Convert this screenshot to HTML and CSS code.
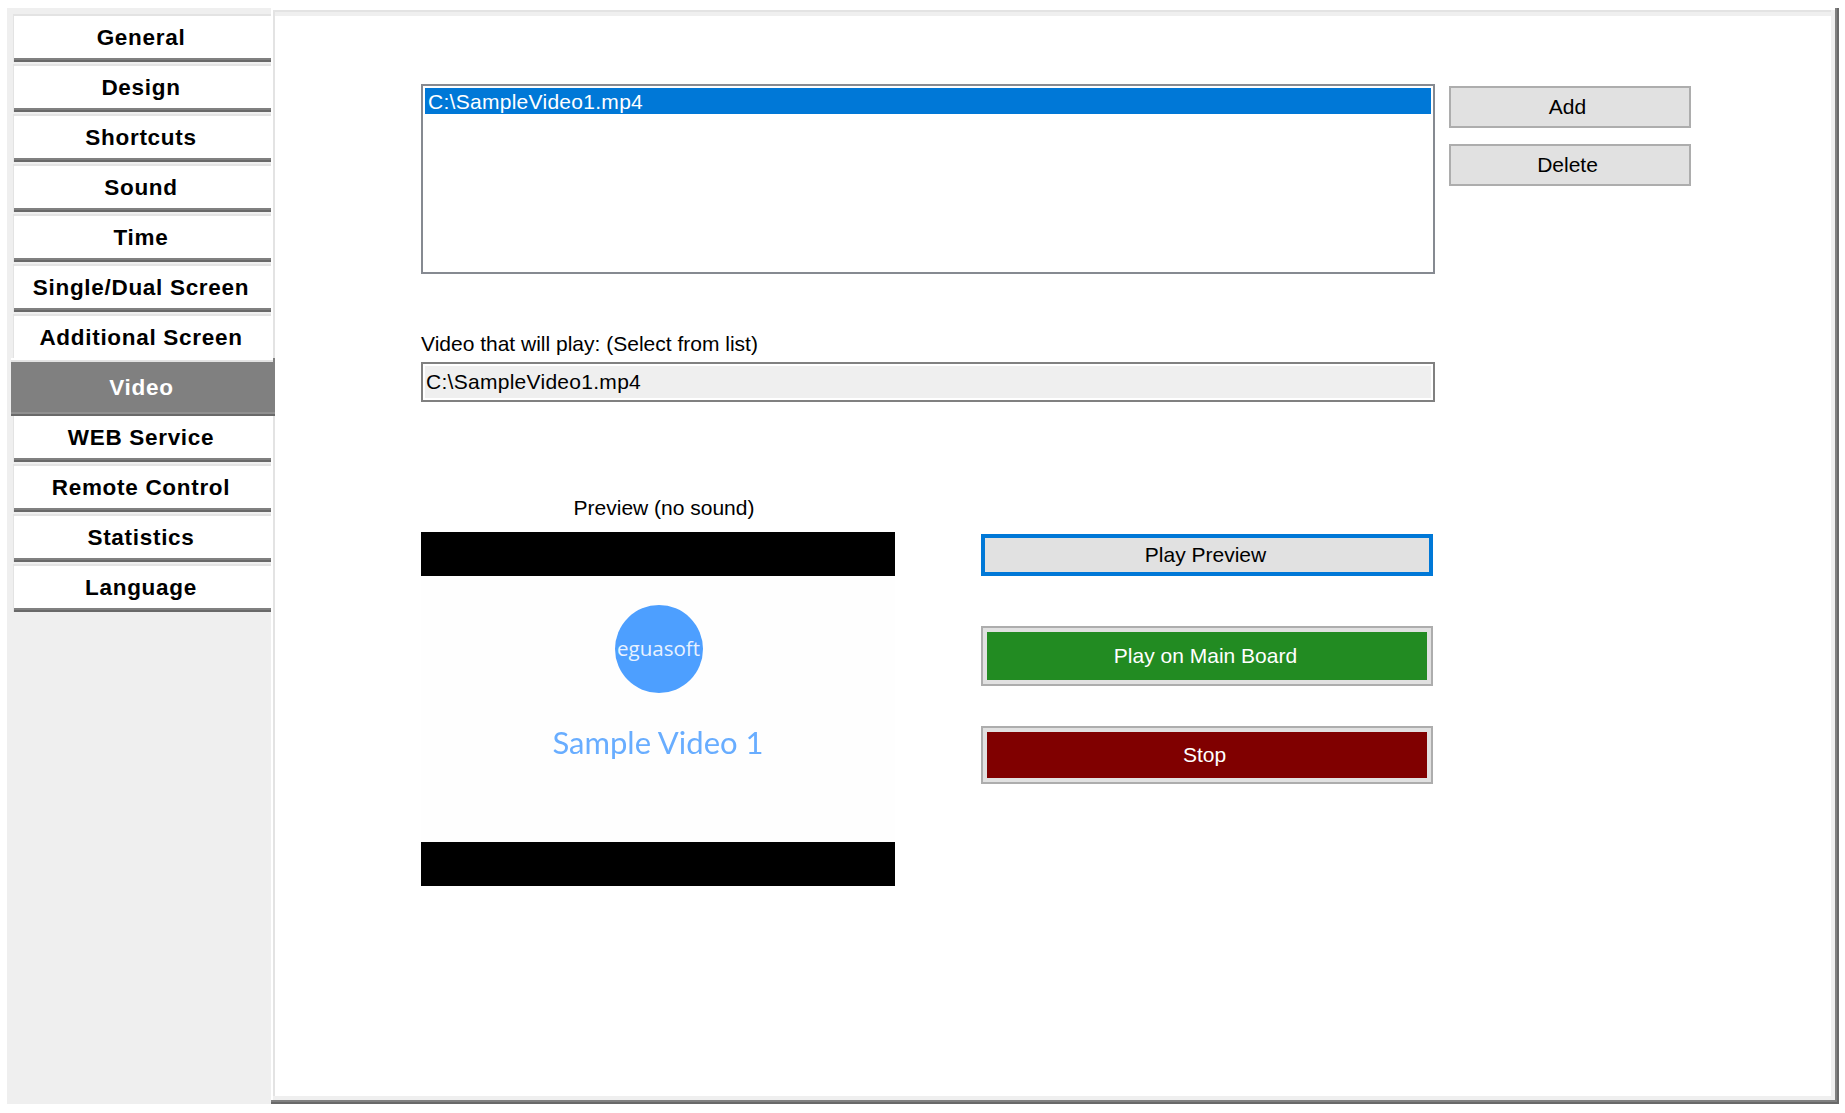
FILE: index.html
```html
<!DOCTYPE html>
<html lang="en">
<head>
<meta charset="utf-8">
<title>Settings - Video</title>
<link rel="stylesheet" href="styles.css">
</head>
<body>
<div class="app">
  <nav class="sidebar">
    <div class="tab">General</div>
    <div class="tab">Design</div>
    <div class="tab">Shortcuts</div>
    <div class="tab">Sound</div>
    <div class="tab">Time</div>
    <div class="tab">Single/Dual Screen</div>
    <div class="tab">Additional Screen</div>
    <div class="tab tab-active">Video</div>
    <div class="tab">WEB Service</div>
    <div class="tab">Remote Control</div>
    <div class="tab">Statistics</div>
    <div class="tab">Language</div>
  </nav>
  <main class="panel">
    <section class="list-row">
      <div class="listbox">
        <div class="list-item">C:\SampleVideo1.mp4</div>
      </div>
      <div class="list-actions">
        <button class="btn btn-small">Add</button>
        <button class="btn btn-small">Delete</button>
      </div>
    </section>
    <label class="field-label">Video that will play: (Select from list)</label>
    <div class="textbox"><span class="textbox-inner">C:\SampleVideo1.mp4</span></div>
    <section class="preview-row">
      <div class="preview-col">
        <div class="preview-label">Preview (no sound)</div>
        <div class="player">
          <div class="letterbox"></div>
          <div class="video-frame">
            <div class="logo">eguasoft</div>
            <div class="video-title">Sample Video 1</div>
          </div>
          <div class="letterbox"></div>
        </div>
      </div>
      <div class="play-col">
        <button class="btn btn-focus">Play Preview</button>
        <button class="btn btn-frame btn-main"><span class="btn-fill fill-green">Play on Main Board</span></button>
        <button class="btn btn-frame btn-stop"><span class="btn-fill fill-red">Stop</span></button>
      </div>
    </section>
  </main>
</div>
</body>
</html>
```
FILE: styles.css
```css
* { box-sizing: border-box; }
html, body { margin: 0; padding: 0; background: #fff; }
body {
  padding: 8px 0 0 7px;
  font-family: "Liberation Sans", Arial, sans-serif;
  font-size: 21px;
  color: #000;
}
.app { display: flex; width: 1832px; height: 1096px; }

.sidebar {
  width: 264px;
  flex: none;
  background: #efefef;
  padding: 6px 0 0 6px;
  display: flex;
  flex-direction: column;
}
.tab {
  width: 258px;
  height: 48px;
  margin-bottom: 2px;
  background: #fff;
  border-top: 2px solid #e3e3e3;
  border-left: 1px solid #e3e3e3;
  box-shadow: inset 0 -2px 0 #696969, inset 0 -4px 0 #808080;
  display: flex;
  align-items: center;
  justify-content: center;
  font-weight: 700;
  font-size: 22.5px;
  letter-spacing: 0.7px;
  padding: 0 3px 3px 0;
}
.tab-active {
  position: relative;
  z-index: 1;
  width: 264px;
  height: 58px;
  margin: -6px 0 -2px -2px;
  background: #808080;
  color: #fff;
  border-top: 2px solid #fff;
  border-left: 0;
  box-shadow: inset 0 -2px 0 #696969, inset 0 -4px 0 #909090, inset 0 2px 0 #e3e3e3;
  padding: 2px 3px 2px 0;
}
.tab-active::after {
  content: "";
  position: absolute;
  top: -2px;
  right: 0;
  width: 2px;
  height: 4px;
  background: #808080;
}

.panel {
  flex: 1;
  padding: 76px 0 0 150px;
  background: #fff;
  box-shadow:
    inset -2px 0 0 #696969,
    inset 0 -2px 0 #696969,
    inset -4px 0 0 #808080,
    inset 0 -4px 0 #808080,
    inset 0 2px 0 #fff,
    inset 2px 0 0 #fff,
    inset -8px -8px 0 #efefef,
    inset 0 4px 0 #e3e3e3,
    inset 4px 0 0 #e3e3e3,
    inset 0 8px 0 #efefef;
}
.list-row { display: flex; gap: 14px; }
.listbox {
  width: 1014px;
  height: 190px;
  border: 2px solid #868a91;
  padding: 2px;
  background: #fff;
}
.list-item {
  height: 26px;
  line-height: 27px;
  padding-left: 3px;
  background: #0078d7;
  color: #fff;
  letter-spacing: 0.28px;
}
.list-actions {
  display: flex;
  flex-direction: column;
  gap: 16px;
  padding-top: 2px;
}

.btn {
  display: block;
  margin: 0;
  padding: 0 3px 0 0;
  width: 452px;
  background: #e1e1e1;
  border: 2px solid #adadad;
  border-radius: 0;
  font: inherit;
  color: #000;
  text-align: center;
}
.btn-small { width: 242px; height: 42px; padding-right: 5px; }
.btn-focus { height: 42px; border: 4px solid #0078d7; }
.btn-frame { padding: 4px; }
.btn-main { height: 60px; margin-top: 50px; }
.btn-stop { height: 58px; margin-top: 40px; }
.btn-fill {
  display: flex;
  align-items: center;
  justify-content: center;
  height: 100%;
  padding-right: 3px;
  color: #fff;
}
.fill-green { background: #228b22; }
.fill-red { background: #800000; padding-right: 5px; }

.field-label {
  display: block;
  margin-top: 56px;
  height: 32px;
  line-height: 28px;
}
.textbox {
  width: 1014px;
  height: 40px;
  border: 2px solid #808080;
  padding: 2px;
  background: #fff;
}
.textbox-inner {
  display: block;
  height: 32px;
  line-height: 31px;
  padding-left: 1px;
  background: #efefef;
  letter-spacing: 0.28px;
}

.preview-row { display: flex; gap: 86px; margin-top: 90px; }
.preview-col { width: 474px; }
.preview-label {
  height: 40px;
  line-height: 31px;
  padding-left: 12px;
  text-align: center;
}
.letterbox { height: 44px; background: #000; }
.video-frame {
  height: 266px;
  padding-top: 29px;
  background: #fefefe;
  display: flex;
  flex-direction: column;
  align-items: center;
}
.logo {
  width: 88px;
  height: 88px;
  margin-left: 1px;
  border-radius: 50%;
  background: #4d9fff;
  color: #e8f2ff;
  font-family: "Open Sans", sans-serif;
  font-size: 20.5px;
  line-height: 86px;
  text-align: center;
  white-space: nowrap;
  overflow: hidden;
}
.video-title {
  margin-top: 27px;
  font-family: Lato, sans-serif;
  font-size: 31px;
  line-height: 44px;
  color: #68adff;
  filter: blur(0.3px);
}
.play-col { padding-top: 42px; }
```
